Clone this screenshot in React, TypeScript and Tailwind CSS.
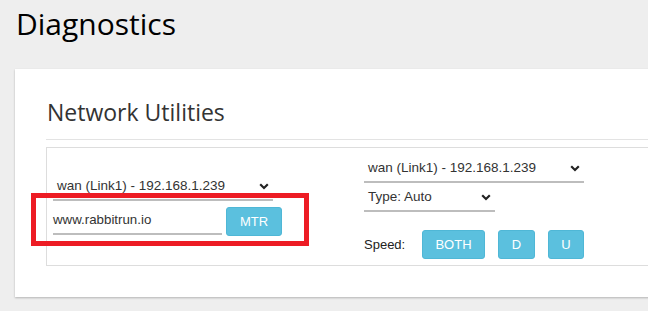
const Chevron = () => (
  <svg width="10" height="7" viewBox="0 0 10 7" className="shrink-0">
    <path d="M1.2 1.3 L5 5 L8.8 1.3" fill="none" stroke="#222" strokeWidth="2.2" />
  </svg>
);

function FakeSelect({ label, width }: { label: string; width: string }) {
  return (
    <div
      className={`${width} flex items-center justify-between border-b-2 border-[#bdbdbd] pl-1 pr-1 pb-[5px] text-[13.5px] leading-[16px] text-[#333]`}
    >
      <span>{label}</span>
      <Chevron />
    </div>
  );
}

function InfoButton({ label, width }: { label: string; width: string }) {
  return (
    <button
      className={`${width} h-[29px] rounded-[3px] bg-[#5bc0de] text-[13px] text-white border border-[#4fb7d6]`}
    >
      {label}
    </button>
  );
}

export default function App() {
  return (
    <div className="relative w-[648px] h-[311px] overflow-hidden bg-[#eeeeee] font-['Liberation_Sans',Arial,sans-serif]">
      <h1 className="pl-4 pt-[4px] h-[44px] text-[30px] leading-[40px] text-black font-['Open_Sans',sans-serif]">
        Diagnostics
      </h1>

      <div className="ml-[15px] mt-[25px] w-[720px] h-[228px] bg-white pl-[31px] pt-[28px] shadow-[0_1px_2px_rgba(0,0,0,0.25)]">
        <h2 className="h-[30px] pl-px text-[23px] leading-[30px] text-[#333] font-['Open_Sans',sans-serif]">
          Network Utilities
        </h2>
        <div className="mt-[12px] h-px bg-[#e3e3e3]" />

        <div className="mt-[7px] h-[119px] flex border border-[#dddddd]">
          <div className="w-[317px] pl-[6px] pt-[30px] flex flex-col gap-[6px]">
            <FakeSelect label="wan (Link1) - 192.168.1.239" width="w-[220px]" />
            <div className="flex gap-[4px]">
              <div className="w-[169px] h-[28px] pt-[5px] border-b-2 border-[#bdbdbd] text-[13.3px] leading-[16px] text-[#333]">
                www.rabbitrun.io
              </div>
              <InfoButton label="MTR" width="w-[56px] h-[28px]" />
            </div>
          </div>

          <div className="pt-[12px] flex flex-col">
            <FakeSelect label="wan (Link1) - 192.168.1.239" width="w-[220px]" />
            <div className="mt-[6px]">
              <FakeSelect label="Type: Auto" width="w-[131px]" />
            </div>
            <div className="mt-[18px] flex items-center text-[13px] text-[#222]">
              <span className="w-[58px]">Speed:</span>
              <div className="flex gap-[13px]">
                <InfoButton label="BOTH" width="w-[63px]" />
                <InfoButton label="D" width="w-[37px]" />
                <InfoButton label="U" width="w-[36px]" />
              </div>
            </div>
          </div>
        </div>
      </div>

      <div className="absolute left-[31px] top-[193px] w-[278px] h-[53px] border-[5px] border-[#ed1c24]" />
    </div>
  );
}
